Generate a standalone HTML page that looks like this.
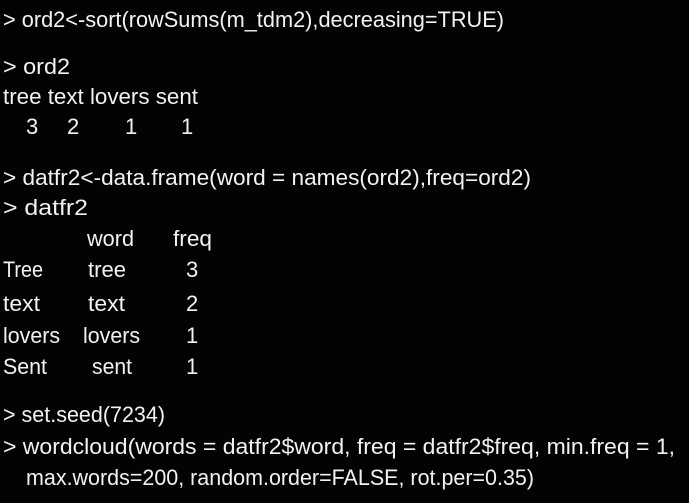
<!DOCTYPE html>
<html><head><meta charset="utf-8"><style>
html,body{margin:0;padding:0;background:#030303;}
svg{display:block}
text{font-family:"Liberation Sans",sans-serif;font-size:22px;fill:#f2f2f2;}
</style></head><body>
<svg width="689" height="503" viewBox="0 0 689 503">
<rect width="689" height="503" fill="#030303"/>
<text x="3" y="27" textLength="501" lengthAdjust="spacingAndGlyphs">&gt; ord2&lt;-sort(rowSums(m_tdm2),decreasing=TRUE)</text>
<text x="3" y="74" textLength="67" lengthAdjust="spacingAndGlyphs">&gt; ord2</text>
<text x="3" y="104" textLength="195" lengthAdjust="spacingAndGlyphs">tree text lovers sent</text>
<text x="26" y="134">3</text>
<text x="67" y="134">2</text>
<text x="125" y="134">1</text>
<text x="181" y="134">1</text>
<text x="3" y="185" textLength="528" lengthAdjust="spacingAndGlyphs">&gt; datfr2&lt;-data.frame(word = names(ord2),freq=ord2)</text>
<text x="3" y="215" textLength="85" lengthAdjust="spacingAndGlyphs">&gt; datfr2</text>
<text x="87" y="246" textLength="47" lengthAdjust="spacingAndGlyphs">word</text>
<text x="173" y="246" textLength="39" lengthAdjust="spacingAndGlyphs">freq</text>
<text x="3" y="277" textLength="40" lengthAdjust="spacingAndGlyphs">Tree</text>
<text x="88" y="277" textLength="38" lengthAdjust="spacingAndGlyphs">tree</text>
<text x="186" y="277">3</text>
<text x="3" y="311" textLength="37" lengthAdjust="spacingAndGlyphs">text</text>
<text x="88" y="311" textLength="37" lengthAdjust="spacingAndGlyphs">text</text>
<text x="186" y="311">2</text>
<text x="3" y="343" textLength="57" lengthAdjust="spacingAndGlyphs">lovers</text>
<text x="83" y="343" textLength="57" lengthAdjust="spacingAndGlyphs">lovers</text>
<text x="186" y="343">1</text>
<text x="3" y="374" textLength="44" lengthAdjust="spacingAndGlyphs">Sent</text>
<text x="92" y="374" textLength="40" lengthAdjust="spacingAndGlyphs">sent</text>
<text x="186" y="374">1</text>
<text x="3" y="422" textLength="162" lengthAdjust="spacingAndGlyphs">&gt; set.seed(7234)</text>
<text x="3" y="454" textLength="672" lengthAdjust="spacingAndGlyphs">&gt; wordcloud(words = datfr2$word, freq = datfr2$freq, min.freq = 1,</text>
<text x="26" y="485" textLength="508" lengthAdjust="spacingAndGlyphs">max.words=200, random.order=FALSE, rot.per=0.35)</text>
</svg>
</body></html>
